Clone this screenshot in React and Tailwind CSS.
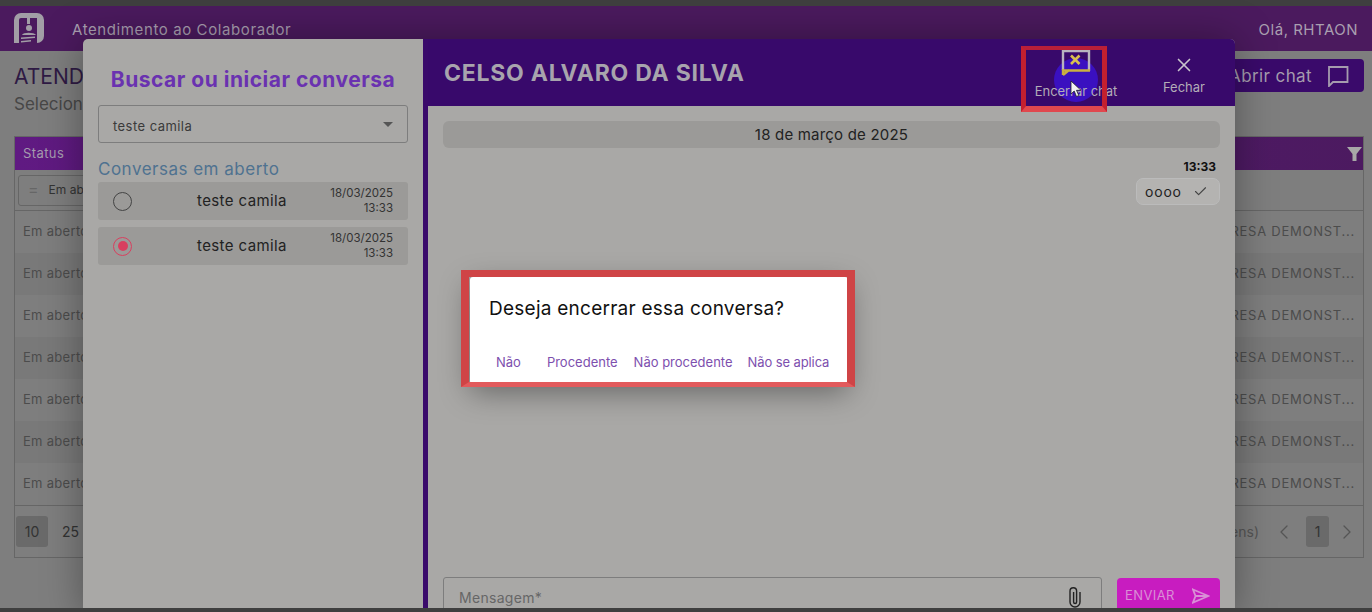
import { X, Check, ChevronLeft, ChevronRight } from "lucide-react";

const rows = [0, 1, 2, 3, 4, 5, 6];

function EndChatIcon() {
  return (
    <svg width="30" height="28" viewBox="0 0 30 28" fill="none" className="block">
      <path d="M2 21V2h26v20" stroke="#b8b3bf" strokeWidth="2.4" />
      <path d="M2 26V21.5h27M2 26l6-5" stroke="#c9b040" strokeWidth="2.4" />
      <path d="M10 6.500l8.500 8.500M18.500 6.500l-8.500 8.500" stroke="#d8c050" strokeWidth="2.6" />
    </svg>
  );
}

function Cursor() {
  return (
    <svg width="12" height="18" viewBox="0 0 12 18" className="absolute left-[37px] top-[41px] block">
      <path d="M1 1v13l3.200-3 2.300 5.500 2.300-1-2.300-5.200h4.500z" fill="#f4f4f4" stroke="#222" strokeWidth="0.8" />
    </svg>
  );
}

function Logo() {
  return (
    <svg width="30" height="31" viewBox="0 0 30 31" className="block">
      <path d="M7 0h16a7 7 0 0 1 7 7v16a7 7 0 0 1-7 7H0V7a7 7 0 0 1 7-7z" fill="#a29ea6" />
      <path d="M7 5h16v25H5V7a2 2 0 0 1 2-2z" fill="#4b1a5e" />
      <rect x="13" y="3" width="3" height="8" fill="#a29ea6" />
      <circle cx="15" cy="15" r="3" fill="#a29ea6" />
      <path d="M8 22c1-3 12-3 14 0z" fill="#a29ea6" />
      <path d="M7 24.500l14-1v1.500l-14 1zM7 28l10-1v1.500l-10 1z" fill="#a29ea6" />
    </svg>
  );
}

function Page() {
  return (
    <div className="h-full bg-[#7e7e7e]">
      <div className="h-[6px] bg-[#3f3f3f]" />
      <div className="flex h-[45px] items-center justify-between bg-[#4b1a5e] px-[14px] text-[#a99fb0]">
        <div className="flex items-center gap-[28px]">
          <Logo />
          <span className="pt-[3px] text-[15px] tracking-[0.6px]">Atendimento ao Colaborador</span>
        </div>
        <span className="pt-[3px] text-[15px] tracking-[0.5px]">Olá, RHTAON</span>
      </div>
      <div className="flex justify-between pl-[14px] pr-[8px] pt-[12px]">
        <div className="whitespace-nowrap">
          <p className="text-[21px] leading-[27px] text-[#2f1a44]">ATENDIMENTO</p>
          <p className="mt-[1px] text-[17px] leading-[26px] text-[#474747]">Selecione uma conversa</p>
        </div>
        <div className="mt-[-4px] flex h-[33px] w-[180px] items-center justify-end gap-[15px] rounded-[4px] bg-[#3a0a6b] pr-[15px] text-[#a59cae]">
          <span className="pt-[2px] text-[17px] tracking-[0.4px]">Abrir chat</span>
          <svg width="22" height="22" viewBox="0 0 22 22" fill="none" stroke="#a59cae" strokeWidth="1.800" className="block">
            <path d="M2 2h18.500v15H6l-4 4z" />
          </svg>
        </div>
      </div>
      <div className="ml-[14px] mr-[8px] mt-[19px] border border-[#666]">
        <div className="flex h-[33px] items-center justify-between bg-linear-to-r from-[#601a82] to-[#4c1a60] pl-[8px] pr-[1px] text-[13px] tracking-[0.4px] text-[#a59cae]">
          <span>Status</span>
          <svg width="15" height="14" viewBox="0 0 15 14" fill="#a8a8a8" className="block">
            <path d="M0 0h15L9.500 7v7h-4V7z" />
          </svg>
        </div>
        <div className="flex h-[41px] items-center border-b border-[#666] pl-[3px]">
          <div className="flex h-[31px] w-[200px] items-center gap-[10px] rounded-[3px] border border-[#666] pl-[9px] text-[12px] text-[#333]">
            <span className="pb-[3px] text-[16px] text-[#666]">=</span>
            <span>Em aberto</span>
          </div>
        </div>
        {rows.map((r) => (
          <div
            key={r}
            className={`flex h-[42px] items-center justify-between px-[8px] text-[13px] text-[#4c4c4c] ${r % 2 === 1 ? "bg-[#797979]" : ""}`}
          >
            <span className="tracking-[0.3px]">Em aberto</span>
            <span className="tracking-[0.75px]">EMPRESA DEMONST...</span>
          </div>
        ))}
        <div className="flex h-[52px] items-center justify-between border-t border-[#666] pl-[1px] pr-[4px] text-[14px] text-[#333]">
          <div className="flex items-center gap-[8px]">
            <span className="flex h-[31px] w-[32px] shrink-0 items-center justify-center rounded-[3px] bg-[#6a6a6a]">10</span>
            <span className="px-[6px]">25</span>
          </div>
          <div className="flex items-center text-[#555]">
            <span className="mr-[13px]">(7 itens)</span>
            <ChevronLeft size={24} strokeWidth={1.300} />
            <span className="ml-[10px] mr-[6px] flex h-[31px] w-[23px] items-center justify-center rounded-[3px] bg-[#6a6a6a] text-[#333]">1</span>
            <ChevronRight size={24} strokeWidth={1.300} />
          </div>
        </div>
      </div>
    </div>
  );
}

function ConversationItem({ selected }) {
  return (
    <div className="flex h-[38px] items-center rounded-[3px] bg-[#9b9a98] px-[15px]">
      <span className={`flex h-[19px] w-[19px] items-center justify-center rounded-full border-[1.5px] ${selected ? "border-[#d8405f]" : "border-[#444]"}`}>
        {selected && <span className="h-[10px] w-[10px] rounded-full bg-[#d8405f]" />}
      </span>
      <span className="ml-[65px] flex-1 pt-[1px] text-[15px] tracking-[0.4px] text-[#222]">teste camila</span>
      <span className="text-right text-[11.5px] leading-[15px] text-[#333]">
        18/03/2025
        <br />
        13:33
      </span>
    </div>
  );
}

function LeftPanel() {
  return (
    <div className="w-[340px] shrink-0 px-[15px]">
      <h2 className="mt-[27px] text-center text-[21px] font-bold leading-[28px] tracking-[0.5px] text-[#6a32b0]">Buscar ou iniciar conversa</h2>
      <div className="mt-[11px] flex h-[38px] items-center justify-between rounded-[3px] border border-[#7d7d7d] px-[14px] text-[13px] tracking-[0.45px] text-[#3a3a3a]">
        <span className="pt-[5px]">teste camila</span>
        <span className="h-0 w-0 border-x-[5px] border-t-[5px] border-x-transparent border-t-[#555]" />
      </div>
      <p className="mt-[14px] text-[17px] leading-[24px] tracking-[0.5px] text-[#4f7290]">Conversas em aberto</p>
      <div className="mt-[1px] flex flex-col gap-[7px]">
        <ConversationItem />
        <ConversationItem selected />
      </div>
    </div>
  );
}

function ChatPanel() {
  return (
    <div className="flex min-w-0 flex-1 flex-col">
      <div className="flex h-[67px] items-start justify-between rounded-tr-[5px] bg-[#38096b] pl-[16px] pr-[30px]">
        <h1 className="mt-[19px] text-[23px] font-bold leading-[30px] tracking-[0.75px] text-[#a8a4ad]">CELSO ALVARO DA SILVA</h1>
        <div className="flex items-start gap-[44px] text-[13px] text-[#b3adb8]">
          <div className="relative flex w-[86px] flex-col items-center">
            <span className="absolute left-[21px] top-[19px] h-[44px] w-[44px] rounded-full bg-[#3a10c0]" />
            <span className="relative mt-[10px]"><EndChatIcon /></span>
            <span className="relative mt-[6px] whitespace-nowrap leading-[16px] tracking-[-0.05px]">Encerrar chat</span>
            <Cursor />
          </div>
          <div className="flex flex-col items-center pt-[15px]">
            <X size={22} strokeWidth={1.800} color="#c8c4cc" />
            <span className="mt-[3px] leading-[16px]">Fechar</span>
          </div>
        </div>
      </div>
      <div className="flex flex-1 flex-col px-[15px] pt-[15px]">
        <div className="flex h-[27px] items-center justify-center rounded-[6px] bg-[#9b9a98] pt-[1px] text-[15px] tracking-[0.2px] text-[#222]">18 de março de 2025</div>
        <p className="mr-[4px] mt-[11px] text-right text-[12px] font-bold leading-[16px] text-[#111]">13:33</p>
        <div className="mt-[3px] flex justify-end">
          <div className="flex h-[27px] w-[84px] items-center justify-between rounded-[7px] border border-[#bbb] bg-[#b4b3b1] pl-[8px] pr-[11px] text-[14px] tracking-[0.8px] text-[#222]">
            <span>oooo</span>
            <Check size={15} strokeWidth={1.800} color="#444" />
          </div>
        </div>
        <div className="mt-auto flex gap-[15px]">
          <div className="flex h-[40px] flex-1 items-center justify-between rounded-[3px] border border-[#7d7d7d] pl-[15px] pr-[19px] text-[14px] tracking-[0.3px] text-[#666]">
            <span>Mensagem*</span>
            <svg width="14" height="22" viewBox="0 0 14 22" fill="none" stroke="#222" strokeWidth="1.400" className="block">
              <path d="M12 6v10a5 5 0 0 1-10 0V5a3.300 3.300 0 0 1 6.600 0v11a1.500 1.500 0 0 1-3 0V6" />
            </svg>
          </div>
          <div className="mt-[1px] flex h-[39px] w-[103px] items-center justify-between rounded-[4px] bg-[#c81cc0] pb-[4px] pl-[8px] pr-[10px] text-[13px] tracking-[0.4px] text-[#d98fd6]">
            <span>ENVIAR</span>
            <svg width="18" height="16" viewBox="0 0 18 16" fill="none" stroke="#d98fd6" strokeWidth="1.800" className="block">
              <path d="M1 1.500L16.500 8 1 14.500 3.500 8zM3.500 8h13" />
            </svg>
          </div>
        </div>
      </div>
    </div>
  );
}

export default function App() {
  return (
    <div className="relative h-[612px] w-[1372px] overflow-hidden font-['Inter',sans-serif]">
      <Page />

      {/* modal */}
      <div className="absolute bottom-[-5px] left-[83px] top-[39px] flex w-[1152px] rounded-[5px] bg-[#a9a8a6] shadow-[0_0_40px_rgba(0,0,0,0.35)]">
        <LeftPanel />
        <div className="w-[5px] shrink-0 bg-[#3a0a6b]" />
        <ChatPanel />
      </div>

      {/* red highlight on header button */}
      <div className="absolute left-[1021px] top-[46px] h-[66px] w-[86px] border-x-[5px] border-b-[6px] border-t-[4px] border-x-[#c4202f] border-b-[#e0484e] border-t-[#b81f3a]" />

      {/* confirm dialog */}
      <div className="absolute left-[470px] top-[277px] h-[107px] w-[378px] rounded-[3px] bg-white pl-[19px] pt-[20px] shadow-[0_8px_30px_rgba(0,0,0,0.4)]">
        <p className="text-[19px] leading-[24px] tracking-[0.25px] text-[#111]">Deseja encerrar essa conversa?</p>
        <div className="mt-[32px] flex items-center whitespace-nowrap text-[13px] text-[#7d4fae]">
          <span className="ml-[7px]">Não</span>
          <span className="ml-[26px]">Procedente</span>
          <span className="ml-[16px]">Não procedente</span>
          <span className="ml-[15px] tracking-[-0.1px]">Não se aplica</span>
        </div>
      </div>
      <div className="absolute left-[461px] top-[270px] h-[117px] w-[394px] border-x-[8px] border-b-[5px] border-t-[7px] border-x-[#cf4446] border-b-[#e25a5c] border-t-[#cf4446]" />

      <div className="absolute bottom-0 left-0 h-[4px] w-full bg-[#3f3f3f]" />
    </div>
  );
}
